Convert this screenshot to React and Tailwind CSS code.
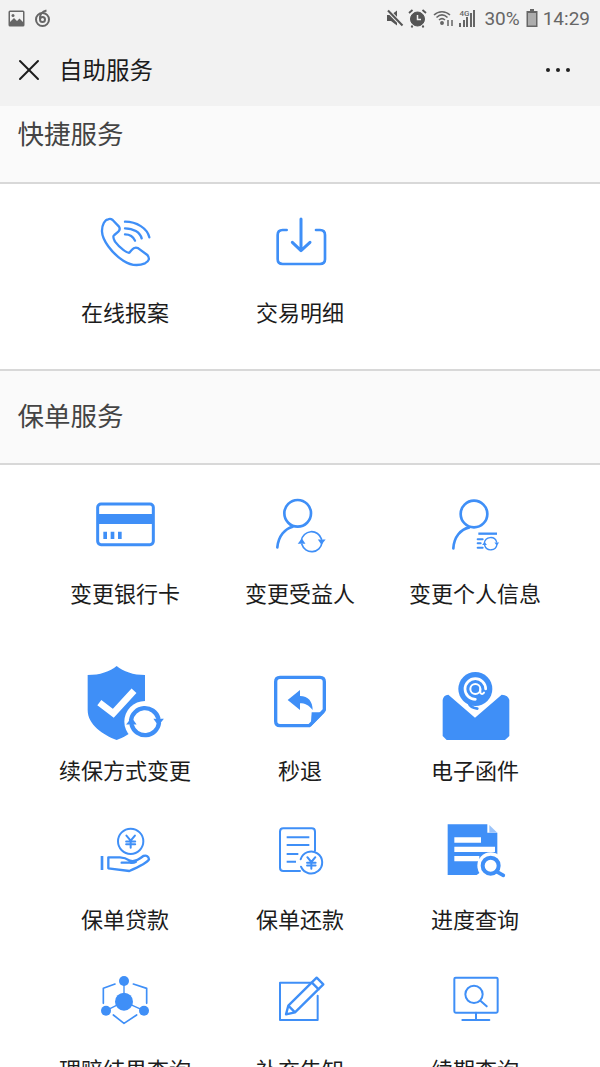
import { X } from "lucide-react";

const BLUE = "#3f8ff7";
const CJK = { fontFamily: '"Noto Sans CJK SC", sans-serif' };

// sync arrows used on the person and shield icons
const Sync = ({ cx, cy, r, w, color = BLUE }) => (
  <g fill="none" stroke={color} strokeWidth={w}>
    <path d={`M${cx - r} ${cy - r * 0.1}A${r} ${r} 0 0 1 ${cx + r * 0.95} ${cy - r * 0.25}`} />
    <path d={`M${cx + r} ${cy + r * 0.1}A${r} ${r} 0 0 1 ${cx - r * 0.95} ${cy + r * 0.25}`} />
    <path
      fill={color}
      stroke="none"
      d={`M${cx + r * 0.6} ${cy - r * 0.2}H${cx + r * 1.35}L${cx + r * 0.95} ${cy + r * 0.3}Z`}
    />
    <path
      fill={color}
      stroke="none"
      d={`M${cx - r * 0.6} ${cy + r * 0.2}H${cx - r * 1.35}L${cx - r * 0.95} ${cy - r * 0.3}Z`}
    />
  </g>
);

const Yen = ({ x, y, s = 1, w = 5 }) => (
  <path
    fill="none"
    stroke={BLUE}
    strokeWidth={w}
    d={`M${x - 15 * s} ${y - 18 * s}L${x} ${y}L${x + 15 * s} ${y - 18 * s}M${x} ${y}V${y + 25 * s}M${x - 16 * s} ${y + 3 * s}H${x + 16 * s}M${x - 16 * s} ${y + 13 * s}H${x + 16 * s}`}
  />
);

const Icon = ({ box, children, size = 60 }) => (
  <svg width={size} height={size} viewBox={box} fill="none" stroke={BLUE} strokeLinecap="round" strokeLinejoin="round">
    {children}
  </svg>
);

const PhoneIcon = () => (
  <Icon box="75 33 180 180">
    <g strokeWidth="7">
      <path d="M115 58C105 58 95 75 96 95C97 120 125 160 160 182C180 195 205 198 225 190C238 183 240 175 232 165L205 145C198 141 190 144 185 150L178 158C172 160 150 145 135 125C128 112 128 108 133 105L145 95C150 90 150 85 147 80L128 60C123 56 118 56 115 58Z" />
      <path d="M165 65C200 65 232 85 238 112M165 85C190 85 210 97 215 115M165 103C180 103 190 110 195 122" />
    </g>
  </Icon>
);

const DownloadIcon = () => (
  <Icon box="600 33 180 180">
    <path strokeWidth="8" d="M650 90H638Q623 90 623 105V178Q623 192 638 192H750Q765 192 765 178V105Q765 90 750 90H738" />
    <path strokeWidth="9" d="M693 57V150M667 127L693 152L720 127" />
  </Icon>
);

const CardIcon = () => (
  <Icon box="75 15 180 180">
    <rect x="83" y="42" width="167" height="122" rx="10" strokeWidth="9" />
    <rect x="83" y="72" width="167" height="30" fill={BLUE} stroke="none" />
    <path fill={BLUE} stroke="none" d="M100 125h11v22h-11zM122 125h11v22h-11zM144 125h11v22h-11z" />
  </Icon>
);

const PersonSyncIcon = () => (
  <Icon box="600 15 180 180">
    <circle cx="683" cy="70" r="40" strokeWidth="8" />
    <path strokeWidth="8" d="M622 172C625 138 645 116 668 110" />
    <Sync cx={725} cy={155} r={31} w={5} />
  </Icon>
);

const PersonInfoIcon = () => (
  <Icon box="1125 15 180 180">
    <circle cx="1212" cy="72" r="40" strokeWidth="8" />
    <path strokeWidth="8" d="M1150 175C1152 140 1172 118 1198 112" />
    <path strokeWidth="7" d="M1225 131H1281" strokeLinecap="butt" />
    <path strokeWidth="6" d="M1223 148H1238M1223 160H1232M1223 173H1238" />
    <Sync cx={1262} cy={161} r={19} w={4} />
  </Icon>
);

const ShieldIcon = () => (
  <Icon box="30 0 270 270" size={90}>
    <path
      fill={BLUE}
      stroke="none"
      d="M140 18C120 35 90 45 53 45V150C53 195 100 225 140 240C180 225 225 195 225 150V45C190 45 160 35 140 18Z"
    />
    <path stroke="#fff" strokeWidth="20" strokeLinecap="butt" strokeLinejoin="miter" d="M88 128L130 160L192 92" />
    <circle cx="225" cy="185" r="62" fill="#fff" stroke="none" />
    <Sync cx={225} cy={185} r={42} w={13} />
  </Icon>
);

const ReplyDocIcon = () => (
  <Icon box="555 0 270 270" size={90}>
    <path strokeWidth="10" d="M630 52H750Q763 52 763 65V150L718 197H630Q617 197 617 184V65Q617 52 630 52Z" />
    <path fill={BLUE} stroke="none" d="M725 157H765L722 200Z" />
    <path fill={BLUE} stroke="none" d="M653 120L690 90V108C715 108 728 125 728 150C715 135 705 130 690 130V150Z" />
  </Icon>
);

const MailIcon = () => (
  <Icon box="1080 0 270 270" size={90}>
    <path
      fill={BLUE}
      stroke="none"
      d="M1118 120Q1120 105 1135 104L1215 173L1295 104Q1315 105 1318 120V228L1305 240H1130L1118 228Z"
    />
    <circle cx="1216" cy="87" r="51" fill={BLUE} stroke="none" />
    <path stroke="#fff" strokeWidth="8" d="M1247 87A31 31 0 1 0 1216 118" />
    <circle cx="1216" cy="87" r="15" stroke="#fff" strokeWidth="6" />
    <path stroke="#fff" strokeWidth="6" d="M1231 87V98Q1236 106 1242 98" />
    <path strokeWidth="8" d="M1196 128Q1200 143 1222 146" />
    <circle cx="1216" cy="87" r="8" fill={BLUE} stroke="none" />
  </Icon>
);

const HandCoinIcon = () => (
  <Icon box="0 -30 270 270" size={90}>
    <circle cx="152" cy="64" r="38" strokeWidth="6" />
    <Yen x={152} y={62} s={0.85} w={6} />
    <path strokeWidth="8" strokeLinecap="butt" d="M66 108V150" />
    <path strokeWidth="7" d="M85 112H120Q135 112 150 122Q165 128 190 108Q205 104 207 118Q200 130 148 153L85 145ZM125 128H150Q160 130 168 125" />
  </Icon>
);

const RepayDocIcon = () => (
  <Icon box="525 -30 270 270" size={90}>
    <path strokeWidth="6" d="M660 153H610Q600 153 600 143V35Q600 25 610 25H695Q705 25 705 35V92" />
    <path strokeWidth="6" strokeLinecap="butt" d="M620 52H688M620 75H688M620 102H655M620 125H648" />
    <path strokeWidth="6" d="M662 118A33 33 0 1 1 663 140" />
    <Yen x={694} y={126} s={0.8} w={6} />
  </Icon>
);

const SearchDocIcon = () => (
  <Icon box="1050 -30 270 270" size={90}>
    <path fill={BLUE} stroke="none" d="M1103 13H1222V38H1252V120L1190 165H1103Z" />
    <path fill="#9cc4fa" stroke="none" d="M1228 15L1252 38H1228Z" />
    <path fill="#fff" stroke="none" d="M1123 52h80v16h-80zM1123 80h122v16h-122zM1123 108h75v16h-75z" />
    <circle cx="1232" cy="137" r="40" fill="#fff" stroke="none" />
    <circle cx="1232" cy="137" r="24" strokeWidth="12" />
    <path strokeWidth="11" d="M1250 155L1270 166" />
  </Icon>
);

const NodesIcon = () => (
  <Icon box="90 -15 270 270" size={90}>
    <path strokeWidth="4" d="M222 48V110L168 137M222 110L282 137" />
    <path strokeWidth="5" d="M195 57L160 70V115M250 57L290 70V115M190 150L222 175L260 150" />
    <circle cx="222" cy="110" r="27" fill={BLUE} stroke="none" />
    <circle cx="222" cy="48" r="15" fill={BLUE} stroke="none" />
    <circle cx="168" cy="137" r="15" fill={BLUE} stroke="none" />
    <circle cx="282" cy="137" r="15" fill={BLUE} stroke="none" />
  </Icon>
);

const EditIcon = () => (
  <Icon box="615 -15 270 270" size={90}>
    <path strokeWidth="6" d="M785 53H690V165H803V92" />
    <path strokeWidth="7" d="M800 38L820 58L735 142L708 148L715 122ZM785 52L806 73M715 122L735 142" />
  </Icon>
);

const MonitorIcon = () => (
  <Icon box="1140 -15 270 270" size={90}>
    <rect x="1213" y="38" width="130" height="105" rx="4" strokeWidth="6" />
    <circle cx="1272" cy="88" r="26" strokeWidth="6" />
    <path strokeWidth="6" d="M1292 108L1310 124M1278 143V165M1237 165H1318" />
  </Icon>
);

const QUICK = [
  { label: "在线报案", icon: <PhoneIcon /> },
  { label: "交易明细", icon: <DownloadIcon /> },
];

const POLICY_ROWS = [
  {
    h: "h-[162px]",
    pt: "pt-[30px]",
    gap: "mt-[21px]",
    items: [
      { label: "变更银行卡", icon: <CardIcon /> },
      { label: "变更受益人", icon: <PersonSyncIcon /> },
      { label: "变更个人信息", icon: <PersonInfoIcon /> },
    ],
  },
  {
    h: "h-[183px]",
    pt: "pt-[33px]",
    gap: "mt-[3px]",
    items: [
      { label: "续保方式变更", icon: <ShieldIcon /> },
      { label: "秒退", icon: <ReplyDocIcon /> },
      { label: "电子函件", icon: <MailIcon /> },
    ],
  },
  {
    h: "h-[150px]",
    pt: "pt-0",
    gap: "mt-[2px]",
    items: [
      { label: "保单贷款", icon: <HandCoinIcon /> },
      { label: "保单还款", icon: <RepayDocIcon /> },
      { label: "进度查询", icon: <SearchDocIcon /> },
    ],
  },
  {
    h: "h-[150px]",
    pt: "pt-0",
    gap: "mt-[2px]",
    items: [
      { label: "理赔结果查询", icon: <NodesIcon /> },
      { label: "补充告知", icon: <EditIcon /> },
      { label: "续期查询", icon: <MonitorIcon /> },
    ],
  },
];

const Cell = ({ item, gap }) => (
  <div className="flex flex-col items-center">
    {item.icon}
    <div className={`${gap} text-[22px] leading-[32px] text-[#1c1c1c] whitespace-nowrap`}>{item.label}</div>
  </div>
);

const StatusBar = () => (
  <div className="flex h-9 items-center justify-between pl-2 pr-[10px] text-[#666]">
    <div className="flex items-center gap-[9px]">
      <svg width="17" height="17" viewBox="0 0 17 17">
        <rect x="0.5" y="0.5" width="16" height="16" rx="1.5" fill="#666" />
        <rect x="2" y="2" width="13" height="13" fill="#f2f2f2" />
        <circle cx="5" cy="5.5" r="1.5" fill="#666" />
        <path d="M2 15V12L6 8L9 11L11.500 8.500L15 12V15Z" fill="#666" />
      </svg>
      <svg width="17" height="18" viewBox="0 0 17 18" fill="none" stroke="#666" strokeWidth="2">
        <circle cx="8.500" cy="10.500" r="6.500" />
        <circle cx="8.500" cy="10.500" r="2.500" />
        <path d="M6 10C5.500 6 8 2.500 12.500 1.500" />
      </svg>
    </div>
    <div className="flex items-center" style={{ fontFamily: "Roboto, sans-serif" }}>
      <svg width="18" height="18" viewBox="0 0 18 18" fill="#555">
        <path d="M1 6H5L11 1.500V16.500L5 12H1Z" />
        <path d="M2 1.500L16.500 16.500" stroke="#f2f2f2" strokeWidth="4" />
        <path d="M2 1.500L16.500 16.500" stroke="#555" strokeWidth="2" />
      </svg>
      <svg className="ml-[4px]" width="19" height="20" viewBox="0 0 19 20" fill="none" stroke="#555">
        <circle cx="9.500" cy="11" r="7" fill="#555" />
        <path d="M9.500 7V11.500H13" stroke="#f2f2f2" strokeWidth="1.500" />
        <path d="M1 5L4.500 2M18 5L14.500 2M4.500 17.500L3.500 19.500M14.500 17.500L15.500 19.500" strokeWidth="1.800" />
      </svg>
      <svg className="ml-[6px]" width="21" height="18" viewBox="0 0 21 18" fill="none" stroke="#666" strokeWidth="1.500">
        <path d="M1 6C5.500 1.500 12.500 1.500 17 6M3.500 8.500C7 5 11 5 14.500 8.500M6 11C8 9.200 10 9.200 12 11" />
        <circle cx="9" cy="14" r="1.200" fill="#666" />
        <path d="M15 11V17M19 11V17" />
      </svg>
      <div className="relative ml-[5px] flex h-[18px] w-[19px] items-end gap-[1.500px]">
        <span className="absolute left-0 top-0 text-[8px] font-medium leading-[9px]">4G</span>
        <span className="w-[2px] h-[4px] bg-[#666]" />
        <span className="w-[2px] h-[7px] bg-[#666]" />
        <span className="w-[2px] h-[10px] bg-[#666]" />
        <span className="w-[2px] h-[14px] bg-[#666]" />
        <span className="w-[2px] h-[17px] bg-[#666]" />
      </div>
      <span className="ml-[6px] text-[19px] leading-none">30%</span>
      <svg className="ml-[6px]" width="12" height="18" viewBox="0 0 12 18">
        <path d="M4 0H8V2H11.500V18H.5V2H4Z" fill="#666" />
        <rect x="2" y="4" width="8" height="12.500" fill="#adadad" />
      </svg>
      <span className="ml-[5px] text-[19px] leading-none">14:29</span>
    </div>
  </div>
);

const SectionTitle = ({ children, className }) => (
  <div className={`flex items-center border-b-2 border-[#d8d8d8] bg-[#fafafa] pl-[17.500px] text-[26.500px] text-[#444] ${className}`}>
    {children}
  </div>
);

export default function App() {
  return (
    <div className="h-[1067px] w-[600px] overflow-hidden bg-white" style={CJK}>
      <div className="bg-[#f2f2f2]">
        <StatusBar />
        <div className="flex h-[70px] items-center justify-between pb-[2px] pl-[11px] pr-[30px]">
          <div className="flex items-center gap-[12px]">
            <X size={36} strokeWidth={2} color="#1c1c1c" absoluteStrokeWidth />
            <span className="text-[23.500px] text-[#1c1c1c]">自助服务</span>
          </div>
          <div className="flex gap-[6px]">
            <span className="h-[4px] w-[4px] rounded-full bg-[#222]" />
            <span className="h-[4px] w-[4px] rounded-full bg-[#222]" />
            <span className="h-[4px] w-[4px] rounded-full bg-[#222]" />
          </div>
        </div>
      </div>

      <SectionTitle className="h-[78px] pb-[22px]">快捷服务</SectionTitle>
      <div className="grid h-[187px] grid-cols-3 border-b-2 border-[#d8d8d8] px-[37.500px] pt-[27px]">
        {QUICK.map((item) => (
          <Cell key={item.label} item={item} gap="mt-[24px]" />
        ))}
      </div>

      <SectionTitle className="h-[94px] pb-[4px]">保单服务</SectionTitle>
      {POLICY_ROWS.map((row) => (
        <div key={row.items[0].label} className={`grid ${row.h} grid-cols-3 px-[37.500px] ${row.pt}`}>
          {row.items.map((item) => (
            <Cell key={item.label} item={item} gap={row.gap} />
          ))}
        </div>
      ))}
    </div>
  );
}
